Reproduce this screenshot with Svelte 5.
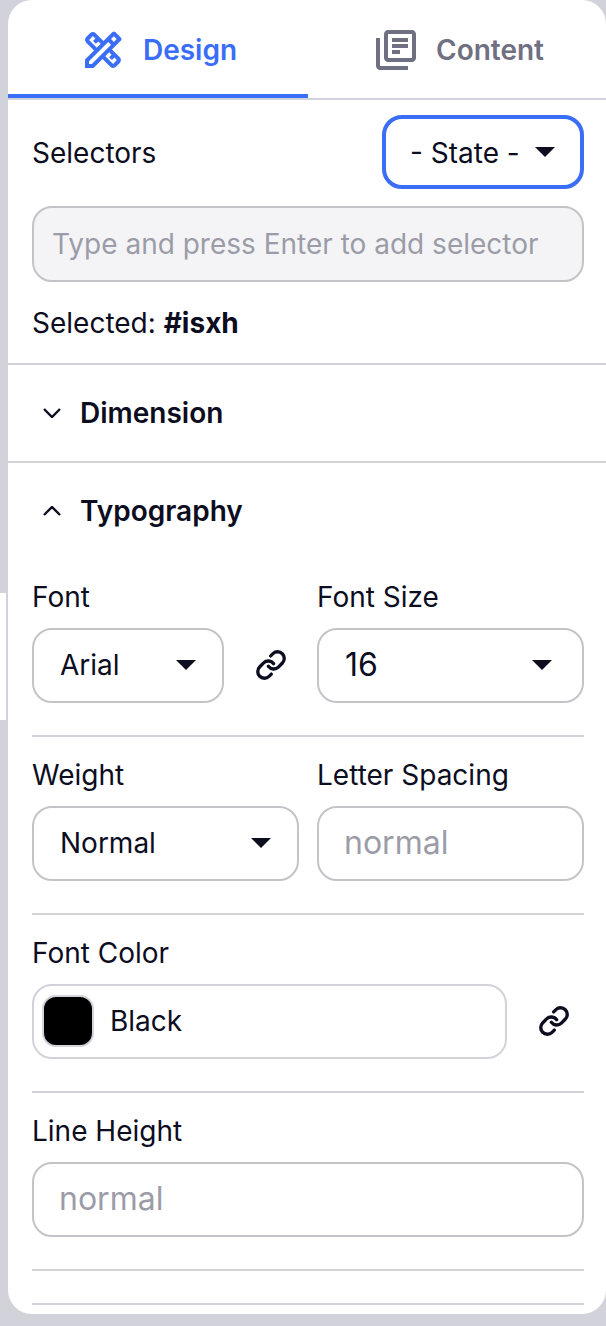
<script>
  let activeTab = 'design';
</script>

{#snippet caret()}
  <svg class="caret" width="20" height="10" viewBox="0 0 20 10" aria-hidden="true"><path d="M0 0h20L10 10z" /></svg>
{/snippet}

{#snippet link()}
  <svg class="link" width="32" height="32" viewBox="0 0 24 24" fill="none" aria-hidden="true">
    <path d="M10 13a5 5 0 0 0 7.54.54l3-3a5 5 0 0 0-7.07-7.07l-1.72 1.71" />
    <path d="M14 11a5 5 0 0 0-7.54-.54l-3 3a5 5 0 0 0 7.07 7.07l1.71-1.71" />
  </svg>
{/snippet}

<div class="sliver"></div>

<div class="panel">
  <nav class="tabs">
    <button class="tab" class:active={activeTab === 'design'} onclick={() => (activeTab = 'design')}>
      <svg width="48" height="48" viewBox="0 0 24 24" aria-hidden="true">
        <path d="M20.97,7.27c0.39-0.39,0.39-1.02,0-1.41l-2.83-2.83c-0.39-0.39-1.02-0.39-1.41,0l-4.49,4.49L8.35,3.63c-0.78-0.78-2.05-0.78-2.83,0l-1.9,1.9c-0.78,0.78-0.78,2.05,0,2.83l3.89,3.89L3,16.76V21h4.24l4.52-4.52l3.89,3.89c0.95,0.95,2.23,0.6,2.83,0l1.9-1.9c0.78-0.78,0.78-2.05,0-2.83l-3.89-3.89L20.97,7.27z M5.04,6.94l1.89-1.9c0,0,0,0,0,0l1.27,1.27L7.02,7.5l1.41,1.41l1.19-1.19l1.2,1.2l-1.9,1.9L5.04,6.94z M16.27,14.38l-1.19,1.19l1.41,1.41l1.19-1.19l1.27,1.27l-1.9,1.9l-3.89-3.89l1.9-1.9L16.27,14.38z M6.41,19H5v-1.41l9.61-9.61l1.3,1.3l0.11,0.11L6.41,19z M16.02,6.56l1.41-1.41l1.41,1.41l-1.41,1.41L16.02,6.56z" />
      </svg>
      Design
    </button>
    <button class="tab" class:active={activeTab === 'content'} onclick={() => (activeTab = 'content')}>
      <svg width="48" height="48" viewBox="0 0 24 24" aria-hidden="true">
        <path d="M4 6H2v14c0 1.1.9 2 2 2h14v-2H4V6zm16-4H8c-1.1 0-2 .9-2 2v12c0 1.1.9 2 2 2h12c1.1 0 2-.9 2-2V4c0-1.1-.9-2-2-2zm0 14H8V4h12v12zM10 9h8v2h-8zm0 3h4v2h-4zm0-6h8v2h-8z" />
      </svg>
      Content
    </button>
  </nav>

  <section class="selectors">
    <div class="selectors-head">
      <span>Selectors</span>
      <div class="state"><span>- State -</span> {@render caret()}</div>
    </div>
    <input class="selector-input" placeholder="Type and press Enter to add selector" />
    <p class="selected">Selected: <b>#isxh</b></p>
  </section>

  <div class="accordion">
    <svg class="chevron" width="18" height="10" viewBox="0 0 18 10" fill="none" aria-hidden="true"><path d="M1 1l8 8 8-8" /></svg>
    Dimension
  </div>

  <div class="accordion open">
    <svg class="chevron" width="18" height="10" viewBox="0 0 18 10" fill="none" aria-hidden="true"><path d="M1 9l8-8 8 8" /></svg>
    Typography
  </div>

  <div class="props">
    <div class="row first">
      <div class="field">
        <span class="label">Font</span>
        <div class="control select narrow">Arial {@render caret()}</div>
      </div>
      <div class="link-slot">{@render link()}</div>
      <div class="field grow">
        <span class="label">Font Size</span>
        <div class="control select size">16 {@render caret()}</div>
      </div>
    </div>

    <div class="row">
      <div class="field half">
        <span class="label">Weight</span>
        <div class="control select">Normal {@render caret()}</div>
      </div>
      <div class="field half">
        <span class="label">Letter Spacing</span>
        <div class="control placeholder">normal</div>
      </div>
    </div>

    <div class="row">
      <div class="field grow">
        <span class="label">Font Color</span>
        <div class="control color">
          <span class="swatch"></span>
          Black
        </div>
      </div>
      <div class="link-slot wide">{@render link()}</div>
    </div>

    <div class="row">
      <div class="field grow">
        <span class="label">Line Height</span>
        <div class="control placeholder">normal</div>
      </div>
    </div>

    <div class="row empty"></div>
  </div>
</div>

<style>
  :global(body) {
    margin: 0;
    background: #d2d2da;
  }

  .sliver {
    position: absolute;
    left: 0;
    top: 593px;
    width: 6px;
    height: 127px;
    background: #fff;
  }

  .panel {
    position: absolute;
    left: 8px;
    top: 0;
    right: 0;
    height: 1314px;
    box-sizing: border-box;
    background: #fff;
    border-radius: 24px;
    overflow: hidden;
    font-family: Inter, "Liberation Sans", sans-serif;
    font-size: 28px;
    line-height: 40px;
    color: #0c0d1f;
  }

  .tabs {
    display: flex;
    height: 100px;
    box-sizing: border-box;
    border-bottom: 2px solid #d2d2da;
  }

  .tab {
    flex: 0 0 300px;
    height: 98px;
    box-sizing: border-box;
    border: none;
    background: none;
    padding: 2px 0 0 2px;
    display: flex;
    align-items: center;
    justify-content: center;
    gap: 16px;
    font: 600 28px/40px Inter, "Liberation Sans", sans-serif;
    color: #6f7082;
    cursor: pointer;
  }

  .tab:last-child {
    flex: 1;
  }

  .tab svg {
    fill: currentColor;
  }

  .tab.active {
    color: #3b6ef6;
    border-bottom: 4px solid #3b6ef6;
    padding: 6px 0 0;
  }

  .selectors {
    padding: 15px 22px 0 24px;
    height: 265px;
    box-sizing: border-box;
    border-bottom: 2px solid #d2d2da;
  }

  .selectors-head {
    display: flex;
    align-items: center;
    justify-content: space-between;
  }

  .selectors-head span {
    padding-top: 2px;
  }

  .state {
    width: 202px;
    height: 74px;
    box-sizing: border-box;
    border: 4px solid #3b6ef6;
    border-radius: 20px;
    display: flex;
    align-items: center;
    justify-content: space-between;
    padding: 0 25px 0 24px;
  }

  .caret {
    fill: #0c0d1f;
    flex: none;
  }

  .selector-input {
    display: block;
    width: 100%;
    height: 76px;
    margin-top: 17px;
    box-sizing: border-box;
    border: 2px solid #c4c4c8;
    border-radius: 20px;
    background: #f4f4f6;
    padding: 0 18px;
    font: 28px Inter, "Liberation Sans", sans-serif;
    outline: none;
  }

  .selector-input::placeholder {
    color: #9b9ca8;
    opacity: 1;
  }

  .selected {
    margin: 21px 0 0;
  }

  .accordion {
    display: flex;
    align-items: center;
    gap: 19px;
    height: 98px;
    box-sizing: border-box;
    padding-left: 35px;
    border-bottom: 2px solid #d2d2da;
    font-weight: 600;
  }

  .accordion.open {
    border-bottom: none;
    padding-bottom: 2px;
  }

  .chevron {
    stroke: #0c0d1f;
    stroke-width: 2.4;
  }

  .props {
    padding: 0 22px 0 24px;
  }

  .row {
    display: flex;
    gap: 18px;
    height: 178px;
    box-sizing: border-box;
    padding-top: 18px;
    border-bottom: 2px solid #d2d2da;
  }

  .row.first {
    height: 177px;
    margin-top: -1px;
    padding-top: 17px;
  }

  .row.empty {
    height: 34px;
    padding: 0;
  }

  .field {
    display: flex;
    flex-direction: column;
  }

  .grow {
    flex: 1;
  }

  .half {
    flex: 1 1 0;
  }

  .label {
    display: block;
    height: 40px;
    margin-bottom: 11px;
  }

  .control {
    height: 75px;
    box-sizing: border-box;
    border: 2px solid #c4c4c8;
    border-radius: 20px;
    padding: 0 26px 2px 26px;
    display: flex;
    align-items: center;
  }

  .select {
    justify-content: space-between;
  }

  .narrow {
    width: 192px;
  }

  .size {
    padding-right: 30px;
    font-size: 32px;
  }

  .placeholder {
    color: #9b9ca8;
    font-size: 32px;
    padding-left: 25px;
  }

  .color {
    border-color: #d2d2da;
    padding: 0 8px 2px;
    gap: 16px;
  }

  .swatch {
    width: 52px;
    height: 52px;
    box-sizing: border-box;
    background: #000;
    border: 2px solid #d2d2da;
    border-radius: 14px;
    flex: none;
  }

  .link-slot {
    width: 57px;
    margin-top: 50px;
    height: 75px;
    display: flex;
    align-items: center;
    justify-content: center;
    flex: none;
  }

  .link-slot.wide {
    width: 77px;
    margin-left: -18px;
    justify-content: flex-end;
    padding-right: 14px;
    box-sizing: border-box;
  }

  .link {
    stroke: #0c0d1f;
    stroke-width: 2.5;
    stroke-linecap: round;
    stroke-linejoin: round;
  }
</style>
